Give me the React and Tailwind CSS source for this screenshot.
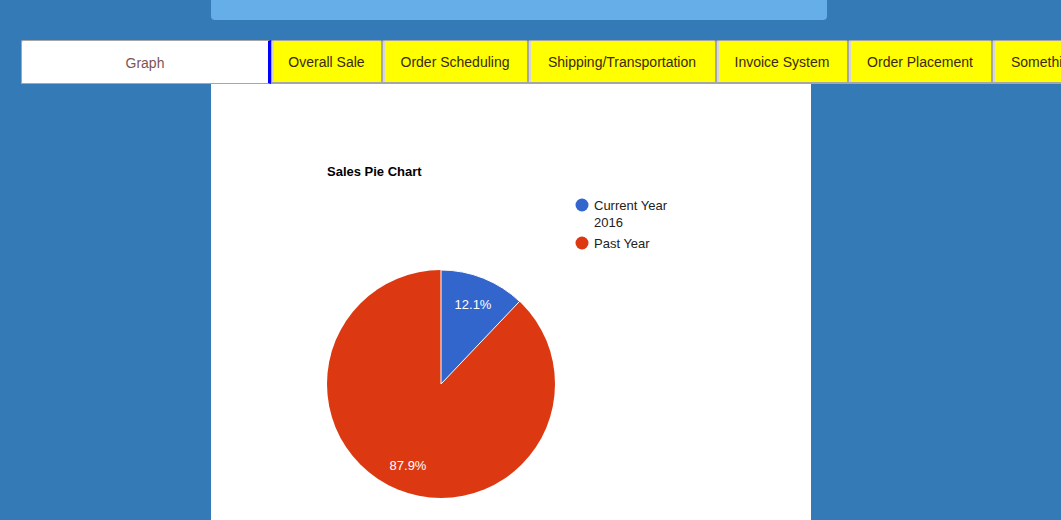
import React from "react";

const tabs = [
  { label: "Overall Sale", w: "w-[111px]" },
  { label: "Order Scheduling", w: "w-[146px]" },
  { label: "Shipping/Transportation", w: "w-[188px]" },
  { label: "Invoice System", w: "w-[132px]" },
  { label: "Order Placement", w: "w-[144px]" },
];

function PieChart() {
  const cx = 230, cy = 300, r = 114;
  const a = 0.121 * 2 * Math.PI;
  const ex = cx + r * Math.sin(a);
  const ey = cy - r * Math.cos(a);
  return (
    <svg width="600" height="436" viewBox="0 0 600 436" className="block" style={{ fontFamily: '"Liberation Sans", Arial, sans-serif' }}>
      <text x="116" y="92" fontSize="13" fontWeight="bold" fill="#000">Sales Pie Chart</text>
      <circle cx="371" cy="121" r="6.5" fill="#3366cc" />
      <text x="383" y="126" fontSize="13" fill="#222">Current Year</text>
      <text x="383" y="143" fontSize="13" fill="#222">2016</text>
      <circle cx="371" cy="159" r="6.5" fill="#dc3912" />
      <text x="383" y="164" fontSize="13" fill="#222">Past Year</text>
      <circle cx={cx} cy={cy} r={r} fill="#dc3912" />
      <path d={`M${cx},${cy} L${cx},${cy - r} A${r},${r} 0 0 1 ${ex},${ey} Z`} fill="#3366cc" stroke="#ffffff" strokeWidth="1" />
      <text x="262" y="225" fontSize="13" fill="#ffffff" textAnchor="middle">12.1%</text>
      <text x="197" y="386" fontSize="13" fill="#ffffff" textAnchor="middle">87.9%</text>
    </svg>
  );
}

export default function App() {
  return (
    <div className="w-[1061px] h-[520px] overflow-hidden bg-[#337ab7]" style={{ fontFamily: '"Liberation Sans", Arial, sans-serif' }}>
      <div className="ml-[211px] w-[616px] h-[20px] bg-[#66aee8] rounded-b-[4px]" />
      <div className="mt-[20px] ml-[21px] flex whitespace-nowrap h-[44px]">
        <div className="w-[250px] shrink-0 h-full bg-white border border-[#a6a6a6] border-r-[3px] border-r-[#0000ff] rounded-tl-[2px] flex items-center justify-center pt-[2px] text-[14px] text-[#7d5454]">
          Graph
        </div>
        {tabs.map((t) => (
          <div
            key={t.label}
            className={`${t.w} shrink-0 h-full bg-[#ffff00] border border-[#a6a6a6] border-b-2 shadow-[inset_2px_0_0_#d6d6d6] rounded-t-[2px] flex items-center justify-center pt-[2px] text-[14px] text-[#3a2a12]`}
          >
            {t.label}
          </div>
        ))}
        <div className="shrink-0 h-full bg-[#ffff00] border border-[#a6a6a6] border-b-2 shadow-[inset_2px_0_0_#d6d6d6] rounded-t-[2px] flex items-center pl-[18px] pr-[17px] pt-[2px] text-[14px] text-[#3a2a12]">
          Something
        </div>
      </div>
      <div className="ml-[211px] w-[600px] h-[436px] bg-white">
        <PieChart />
      </div>
    </div>
  );
}
